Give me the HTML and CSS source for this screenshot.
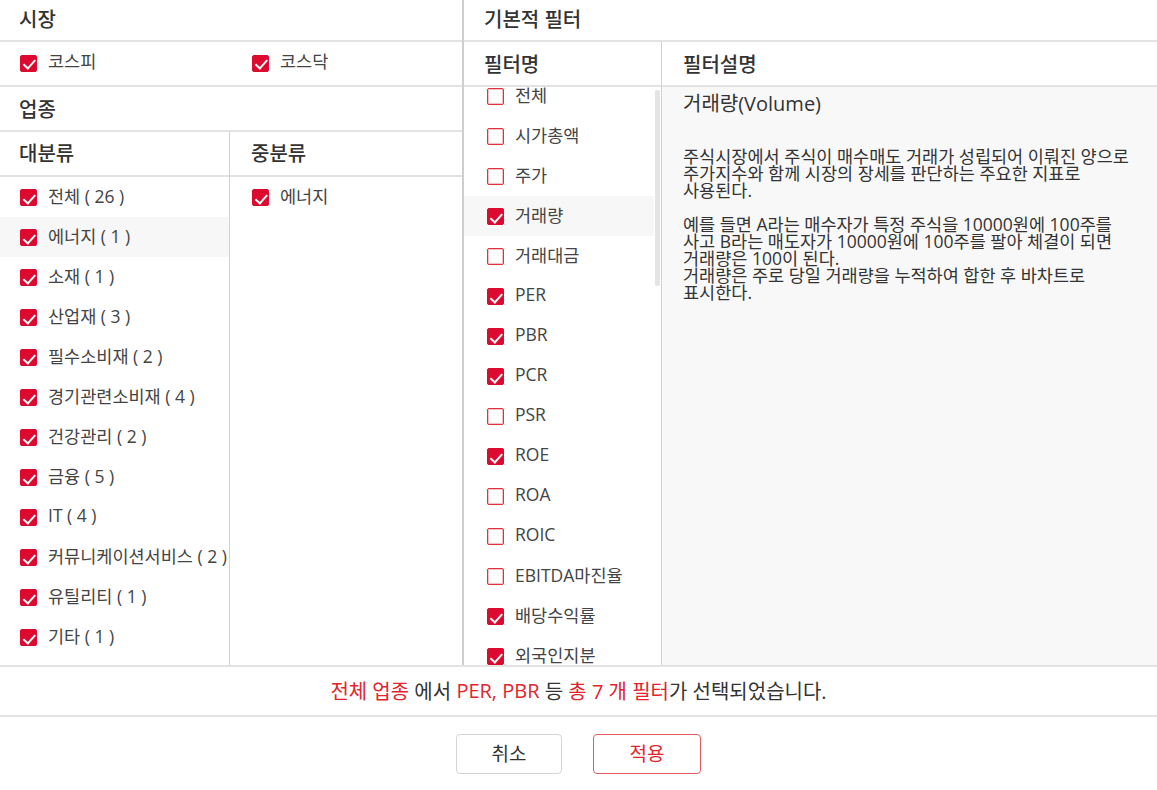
FILE: index.html
```html
<!DOCTYPE html>
<html lang="ko">
<head>
<meta charset="utf-8">
<title>필터 설정</title>
<link rel="stylesheet" href="styles.css">
</head>
<body>
<div class="dialog">
  <div class="panels">
    <section class="left">
      <div class="sec-head first">시장</div>
      <div class="two-col market">
        <div class="cell"><label class="item"><span class="box on"></span><span class="t">코스피</span></label></div>
        <div class="cell"><label class="item"><span class="box on"></span><span class="t">코스닥</span></label></div>
      </div>
      <div class="sec-head">업종</div>
      <div class="two-col cats">
        <div class="col main">
          <div class="col-head">대분류</div>
          <ul class="list">
            <li class="item"><span class="box on"></span><span class="t">전체 ( 26 )</span></li>
            <li class="item hl"><span class="box on"></span><span class="t">에너지 ( 1 )</span></li>
            <li class="item"><span class="box on"></span><span class="t">소재 ( 1 )</span></li>
            <li class="item"><span class="box on"></span><span class="t">산업재 ( 3 )</span></li>
            <li class="item"><span class="box on"></span><span class="t">필수소비재 ( 2 )</span></li>
            <li class="item"><span class="box on"></span><span class="t">경기관련소비재 ( 4 )</span></li>
            <li class="item"><span class="box on"></span><span class="t">건강관리 ( 2 )</span></li>
            <li class="item"><span class="box on"></span><span class="t">금융 ( 5 )</span></li>
            <li class="item"><span class="box on"></span><span class="t">IT ( 4 )</span></li>
            <li class="item"><span class="box on"></span><span class="t">커뮤니케이션서비스 ( 2 )</span></li>
            <li class="item"><span class="box on"></span><span class="t">유틸리티 ( 1 )</span></li>
            <li class="item"><span class="box on"></span><span class="t">기타 ( 1 )</span></li>
          </ul>
        </div>
        <div class="col sub">
          <div class="col-head">중분류</div>
          <ul class="list">
            <li class="item"><span class="box on"></span><span class="t">에너지</span></li>
          </ul>
        </div>
      </div>
    </section>
    <section class="right">
      <div class="sec-head first">기본적 필터</div>
      <div class="filter-grid">
        <div class="fcol names">
          <div class="col-head">필터명</div>
          <div class="scroll">
            <ul class="list shifted">
              <li class="item"><span class="box"></span><span class="t">전체</span></li>
              <li class="item"><span class="box"></span><span class="t">시가총액</span></li>
              <li class="item"><span class="box"></span><span class="t">주가</span></li>
              <li class="item hl"><span class="box on"></span><span class="t">거래량</span></li>
              <li class="item"><span class="box"></span><span class="t">거래대금</span></li>
              <li class="item"><span class="box on"></span><span class="t">PER</span></li>
              <li class="item"><span class="box on"></span><span class="t">PBR</span></li>
              <li class="item"><span class="box on"></span><span class="t">PCR</span></li>
              <li class="item"><span class="box"></span><span class="t">PSR</span></li>
              <li class="item"><span class="box on"></span><span class="t">ROE</span></li>
              <li class="item"><span class="box"></span><span class="t">ROA</span></li>
              <li class="item"><span class="box"></span><span class="t">ROIC</span></li>
              <li class="item"><span class="box"></span><span class="t">EBITDA마진율</span></li>
              <li class="item"><span class="box on"></span><span class="t">배당수익률</span></li>
              <li class="item"><span class="box on"></span><span class="t">외국인지분</span></li>
            </ul>
            <div class="scrollbar"></div>
          </div>
        </div>
        <div class="fcol desc">
          <div class="col-head">필터설명</div>
          <div class="desc-body">
            <h2 class="desc-title">거래량(Volume)</h2>
            <p class="desc-text">주식시장에서 주식이 매수매도 거래가 성립되어 이뤄진 양으로<br>주가지수와 함께 시장의 장세를 판단하는 주요한 지표로<br>사용된다.<br><br>예를 들면 A라는 매수자가 특정 주식을 10000원에 100주를<br>사고 B라는 매도자가 10000원에 100주를 팔아 체결이 되면<br>거래량은 100이 된다.<br>거래량은 주로 당일 거래량을 누적하여 합한 후 바차트로<br>표시한다.</p>
          </div>
        </div>
      </div>
    </section>
  </div>
  <div class="summary"><span class="red">전체 업종</span> 에서 <span class="red">PER, PBR</span> 등 <span class="red">총 7 개 필터</span>가 선택되었습니다.</div>
  <div class="actions">
    <button class="btn cancel">취소</button>
    <button class="btn apply">적용</button>
  </div>
</div>
</body>
</html>
```

FILE: styles.css
```css
* { box-sizing: border-box; }
html, body { margin: 0; padding: 0; background: #fff; }
body {
  font-family: "Open Sans", "Noto Sans CJK KR", sans-serif;
  color: #333;
  width: 1157px;
  height: 790px;
  overflow: hidden;
}
ul { list-style: none; margin: 0; padding: 0; }

.dialog { display: flex; flex-direction: column; height: 790px; }

.panels {
  display: flex;
  height: 665px;
  overflow: hidden;
}
.left {
  width: 464px;
  border-right: 2px solid #cfcfcf;
  display: flex;
  flex-direction: column;
}
.right {
  flex: 1;
  display: flex;
  flex-direction: column;
  min-width: 0;
}

.sec-head {
  height: 45px;
  border-bottom: 2px solid #e3e3e3;
  padding-left: 19px;
  font-size: 20px;
  font-weight: 500;
  color: #333;
  display: flex;
  align-items: center;
  flex-shrink: 0;
}
.sec-head.first { height: 42px; padding-bottom: 3px; }
.right .sec-head { padding-left: 20px; }

.two-col { display: grid; grid-template-columns: 230px 1fr; }
.market {
  height: 45px;
  border-bottom: 2px solid #e3e3e3;
  flex-shrink: 0;
}
.market .cell { display: flex; align-items: center; padding-left: 20px; padding-bottom: 2px; }
.market .cell + .cell { padding-left: 22px; }

.cats { flex: 1; min-height: 0; }
.col { min-width: 0; }
.col.main { border-right: 1px solid #d2d2d2; }

.col-head {
  height: 45px;
  border-bottom: 2px solid #e3e3e3;
  padding-left: 19px;
  padding-bottom: 2px;
  font-size: 20px;
  font-weight: 500;
  color: #333;
  display: flex;
  align-items: center;
}
.col.sub .col-head { padding-left: 21px; }

.item {
  display: flex;
  align-items: center;
  font-size: 17.5px;
  color: #444;
  white-space: nowrap;
}
.item .t { padding-bottom: 4px; }
.list .item { height: 40px; padding-left: 20px; }
.col.sub .list .item { padding-left: 22px; }
.item.hl { background: #f7f7f7; }

.box {
  width: 17px;
  height: 17px;
  margin: 1px 11px 0 0;
  border: 1px solid #e0303c;
  border-radius: 2px;
  background: #fff;
  box-shadow: inset 0 0 0 1px rgba(224, 48, 60, 0.3);
  flex-shrink: 0;
  position: relative;
}
.box.on { background: #dc0a2e; border-color: #dc0a2e; box-shadow: none; }
.box.on::after {
  content: "";
  position: absolute;
  left: 5px;
  top: 1.5px;
  width: 5px;
  height: 9.5px;
  border-right: 2.5px solid #fff;
  border-bottom: 2.5px solid #fff;
  transform: rotate(42deg);
}

.filter-grid {
  flex: 1;
  display: grid;
  grid-template-columns: 198px 1fr;
  min-height: 0;
}
.fcol { display: flex; flex-direction: column; min-height: 0; }
.fcol.names { border-right: 1px solid #d2d2d2; }
.fcol .col-head { padding-left: 20px; flex-shrink: 0; padding-bottom: 0; }
.fcol.desc .col-head { padding-left: 21px; }

.scroll { position: relative; flex: 1; overflow: hidden; }
.shifted { margin-top: -11px; }
.names .list .item { padding-left: 23px; margin-right: 7px; }
.scrollbar {
  position: absolute;
  right: 1px;
  top: 3px;
  width: 5px;
  height: 196px;
  background: #e4e4e4;
  border-radius: 2px;
}

.desc-body {
  flex: 1;
  background: #f8f8f8;
  padding: 5px 10px 0 21px;
}
.desc-title {
  margin: 0;
  font-size: 20px;
  font-weight: 400;
  line-height: 24px;
  color: #333;
}
.desc-text {
  margin: 32px 0 0;
  font-size: 17.5px;
  line-height: 17px;
  color: #333;
  white-space: nowrap;
}

.summary {
  height: 52px;
  border-top: 2px solid #e3e3e3;
  border-bottom: 2px solid #e3e3e3;
  display: flex;
  align-items: center;
  justify-content: center;
  font-size: 20px;
  color: #333;
  white-space: pre;
  padding-bottom: 2px;
}
.red { color: #e2252d; }

.actions {
  display: flex;
  justify-content: center;
  gap: 31px;
  padding-top: 17px;
}
.btn {
  height: 40px;
  border-radius: 4px;
  background: #fff;
  font-family: inherit;
  font-size: 19px;
  cursor: pointer;
  padding: 0 0 3px;
}
.btn.cancel { width: 106px; border: 1px solid #d4d4d4; color: #333; }
.btn.apply { width: 108px; border: 1px solid #e35b5f; color: #e2252d; }
```
